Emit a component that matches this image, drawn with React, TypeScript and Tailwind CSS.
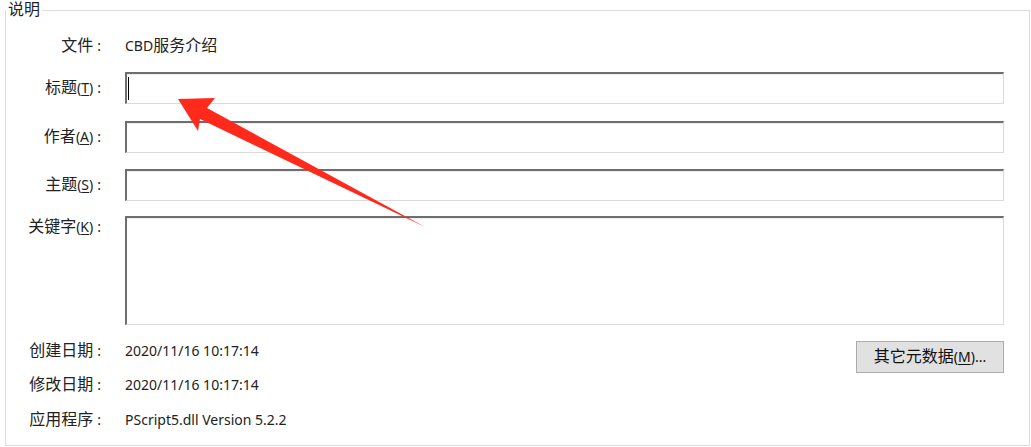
import { Fragment } from "react";

const font = {
  fontFamily: '"Noto Sans", "Noto Sans CJK SC", sans-serif',
};

// CJK glyphs need to be a little larger than the Latin ones to match the YaHei look
function T({ s }: { s: string }) {
  const parts = s.split(/([\u3400-\u9fff\uff00-\uffef]+)/);
  return (
    <>
      {parts.map((p, i) =>
        /[\u3400-\u9fff\uff00-\uffef]/.test(p) ? (
          <span key={i} className="text-[16px] leading-[16px]">
            {p}
          </span>
        ) : (
          <Fragment key={i}>{p}</Fragment>
        )
      )}
    </>
  );
}

function Label({ text, hotkey }: { text: string; hotkey?: string }) {
  return (
    <div className="h-[20px] w-[95px] shrink-0 text-right leading-[20px] whitespace-nowrap">
      <T s={text} />
      {hotkey && (
        <>
          (<span className="underline underline-offset-2">{hotkey}</span>)
        </>
      )}
      <span className="ml-[4px]">:</span>
    </div>
  );
}

function Field({ h, cursor }: { h: string; cursor?: boolean }) {
  return (
    <div
      className={`w-[879px] ${h} border-t-2 border-l-2 border-t-[#6e6e6e] border-l-[#6e6e6e] border-r border-b border-r-[#dadada] border-b-[#dadada] bg-white`}
    >
      <div className="h-full w-full border-t border-[#eeeeee]">
        {cursor && <div className="ml-[1px] mt-[2px] h-[23px] w-px bg-black" />}
      </div>
    </div>
  );
}

export default function App() {
  return (
    <div className="relative h-[447px] w-[1031px] overflow-hidden bg-white text-[14px] text-[#222]" style={font}>
      <fieldset className="ml-[5px] h-[446px] w-[1025px] border border-[#dcdcdc] p-0">
        <legend className="ml-0 px-[2px] leading-[20px] text-[#222]">
          <T s="说明" />
        </legend>
        <div className="flex flex-col">
          <div className="mt-[16px] flex h-[20px] items-center gap-x-[24px]">
            <Label text="文件" />
            <div className="h-[20px] leading-[20px]">
              <T s="CBD服务介绍" />
            </div>
          </div>
          <div className="mt-[16px] flex items-center gap-x-[24px]">
            <Label text="标题" hotkey="T" />
            <Field h="h-[32px]" cursor />
          </div>
          <div className="mt-[17px] flex items-center gap-x-[24px]">
            <Label text="作者" hotkey="A" />
            <Field h="h-[32px]" />
          </div>
          <div className="mt-[16px] flex items-center gap-x-[24px]">
            <Label text="主题" hotkey="S" />
            <Field h="h-[32px]" />
          </div>
          <div className="mt-[15px] flex items-start gap-x-[24px]">
            <div className="pt-[1px]">
              <Label text="关键字" hotkey="K" />
            </div>
            <Field h="h-[109px]" />
          </div>
          <div className="mt-[16px] flex items-start gap-x-[24px]">
            <Label text="创建日期" />
            <div className="flex w-[879px] items-start justify-between">
              <div className="leading-[20px]">2020/11/16 10:17:14</div>
              <button className="h-[32px] w-[148px] border border-[#adadad] bg-[#e1e1e1] leading-[20px] text-[#111]">
                <T s="其它元数据" />(<span className="underline underline-offset-2">M</span>)...
              </button>
            </div>
          </div>
          <div className="mt-[2px] flex items-center gap-x-[24px]">
            <Label text="修改日期" />
            <div className="leading-[20px]">2020/11/16 10:17:14</div>
          </div>
          <div className="mt-[15px] flex items-center gap-x-[24px]">
            <Label text="应用程序" />
            <div className="leading-[20px]">PScript5.dll Version 5.2.2</div>
          </div>
        </div>
      </fieldset>
      <svg className="pointer-events-none absolute left-0 top-0" width="1031" height="447" viewBox="0 0 1031 447">
        <polygon points="178,99 215,98 207,108 425,227 200,119 198,131" fill="#ff2a1c" />
      </svg>
    </div>
  );
}
